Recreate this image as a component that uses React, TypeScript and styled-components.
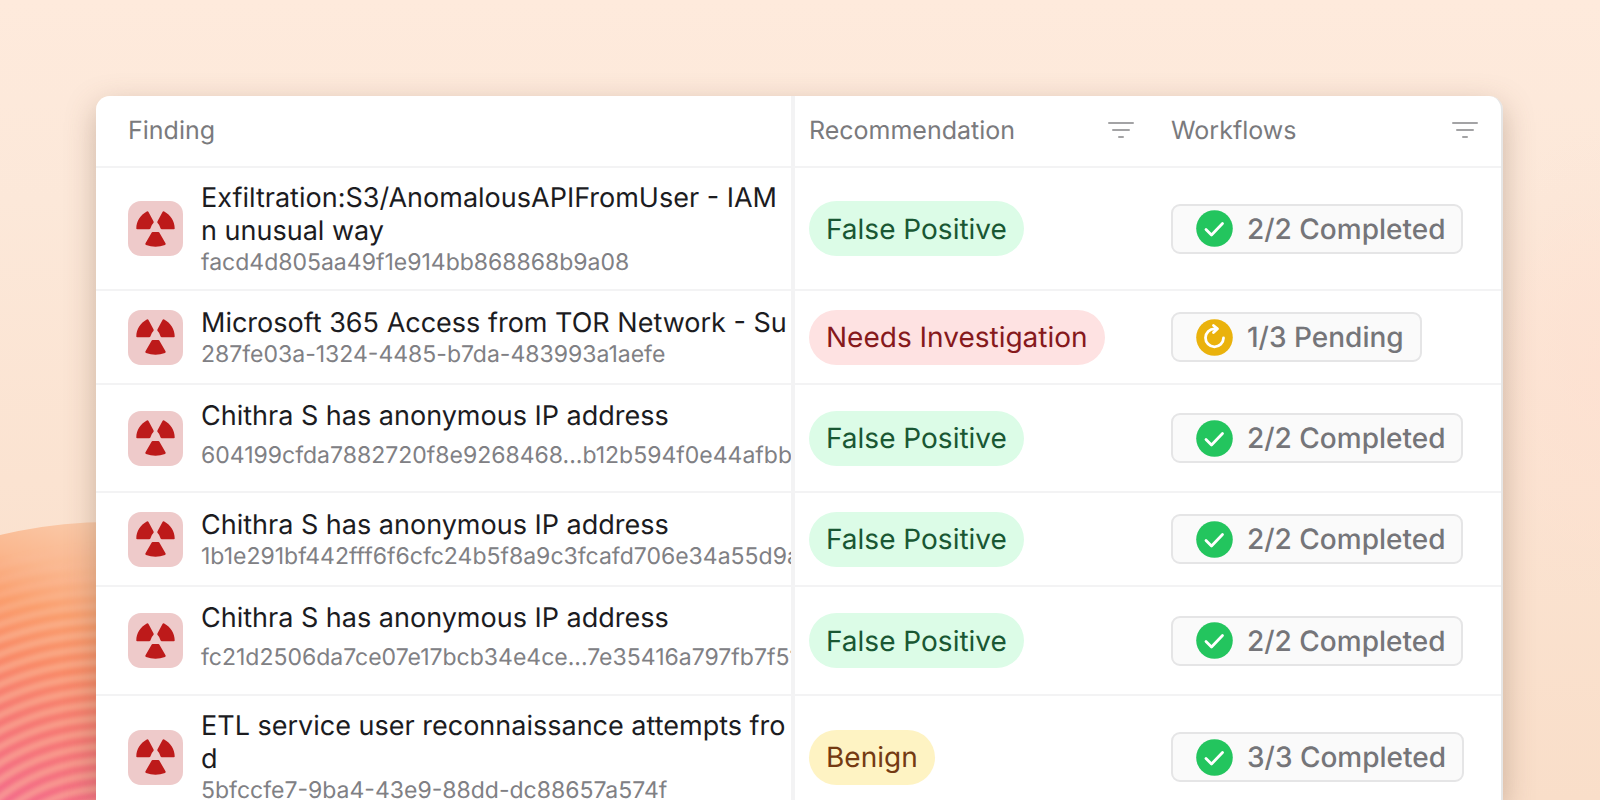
import React from "react";
import styled, { createGlobalStyle } from "styled-components";

type Tone = "positive" | "danger" | "benign";
type Status = "done" | "pending";

const GlobalStyle = createGlobalStyle`
  *, *::before, *::after { box-sizing: border-box; }
  body {
    margin: 0;
    font-family: Inter, "Liberation Sans", sans-serif;
    text-rendering: geometricPrecision;
  }
`;

const Stage = styled.main`
  position: relative;
  height: 100vh;
  overflow: hidden;
  padding: 96px 97px 0 96px;
  background:
    radial-gradient(ellipse 140px 240px at 100% 46%, rgba(255, 222, 208, 0.5), rgba(255, 222, 208, 0)),
    linear-gradient(180deg, #feeadc 0%, #fce8d9 25%, #fbe3d1 60%, #f9dec9 100%);
`;

const Waves = styled.svg`
  position: absolute;
  left: 0;
  bottom: 0;
  width: 240px;
  height: 300px;
`;

const Card = styled.section`
  position: relative;
  height: 100%;
  border-radius: 14px 14px 0 0;
  box-shadow: 0 10px 30px rgba(110, 80, 60, 0.34);
`;

const Clip = styled.div`
  height: 100%;
  overflow: hidden;
  border-right: 2px solid #e6e6e6;
  border-radius: 14px 14px 0 0;
  background: #fff;
`;

const Table = styled.table`
  width: 100%;
  table-layout: fixed;
  border-collapse: separate;
  border-spacing: 0;
`;

const FindingCol = styled.col`
  width: 699px;
`;

const RecommendationCol = styled.col`
  width: 362px;
`;

const HeadCell = styled.th<{ $first?: boolean }>`
  height: 72px;
  padding: ${(p) => (p.$first ? "0 0 0 32px" : "0 23px 0 14px")};
  border-bottom: 2px solid #f3f3f4;
  border-right: ${(p) => (p.$first ? "4px solid #f3f3f4" : "0")};
  color: #7a7a7d;
  font-size: 25px;
  font-weight: 400;
  line-height: 32px;
  text-align: left;
`;

const HeadInner = styled.div`
  display: flex;
  align-items: center;
  justify-content: space-between;
`;

const FilterButton = styled.button`
  display: flex;
  padding: 0;
  border: 0;
  background: none;
  color: #a3a3a5;
`;

const Row = styled.tr<{ $height: number }>`
  height: ${(p) => p.$height}px;
`;

const Cell = styled.td<{ $first?: boolean }>`
  padding: ${(p) => (p.$first ? "0 0 0 32px" : "0 0 0 14px")};
  border-bottom: 2px solid #f3f3f4;
  border-right: ${(p) => (p.$first ? "4px solid #f3f3f4" : "0")};
  overflow: hidden;
  vertical-align: middle;
`;

const Finding = styled.div`
  display: flex;
  align-items: center;
  gap: 18px;
`;

const Tile = styled.span`
  display: flex;
  flex: none;
  align-items: center;
  justify-content: center;
  width: 55px;
  height: 55px;
  border-radius: 13px;
  background: #eecaca;
`;

const FindingText = styled.div`
  min-width: 0;
  white-space: nowrap;
`;

const Title = styled.div`
  color: #1c1c1f;
  font-size: 27px;
  line-height: 33px;
`;

const Ident = styled.div<{ $tall?: boolean }>`
  color: #808084;
  font-size: 23px;
  line-height: ${(p) => (p.$tall ? 46 : 30)}px;
`;

const tones: Record<Tone, [string, string]> = {
  positive: ["#dcfce7", "#195733"],
  danger: ["#fee2e2", "#86191c"],
  benign: ["#fef3c3", "#743a12"],
};

const Pill = styled.span<{ $tone: Tone }>`
  display: inline-flex;
  align-items: center;
  height: 55px;
  padding: 0 17px;
  border-radius: 28px;
  background: ${(p) => tones[p.$tone][0]};
  color: ${(p) => tones[p.$tone][1]};
  font-size: 28px;
  line-height: 34px;
  vertical-align: middle;
`;

const WorkflowButton = styled.button`
  display: inline-flex;
  align-items: center;
  gap: 14px;
  height: 50px;
  padding: 0 16px 0 23px;
  border: 2px solid #e5e5e6;
  border-radius: 9px;
  background: #fafafa;
  color: #757579;
  font-family: inherit;
  font-size: 28px;
  font-weight: 500;
  line-height: 34px;
  text-rendering: inherit;
  vertical-align: middle;
  white-space: nowrap;
`;

const Radiation = () => (
  <svg width="39" height="36" viewBox="0 0 39 36" fill="#bd1a1a" aria-hidden="true">
    <path d="M.3 17.500C.3 10 4.500 4 10.800 .5Q11.900 0 12.500 1L17.600 10.500Q18 11.500 17.200 12.300Q15.200 14.200 14.600 17Q14.300 18.200 13 18.200H1.200Q.3 18.200 .3 17.500Z" />
    <path d="M38.700 17.500C38.700 10 34.500 4 28.200 .5Q27.100 0 26.500 1L21.400 10.500Q21 11.500 21.800 12.300Q23.800 14.200 24.400 17Q24.700 18.200 26 18.200H37.800Q38.700 18.200 38.700 17.500Z" />
    <path d="M15.700 21.500Q16.100 20.700 17 21H22Q22.900 20.700 23.300 21.500L29.500 32.300Q30 33.400 29 34Q19.500 37.500 10 34Q9 33.400 9.500 32.300Z" />
  </svg>
);

const FilterIcon = () => (
  <svg width="26" height="20" viewBox="0 0 26 20" stroke="currentColor" strokeWidth="2" strokeLinecap="round" aria-hidden="true">
    <path d="M1 2H25M5 9H21M11 16H15" />
  </svg>
);

const StatusIcon = ({ status }: { status: Status }) => (
  <svg width="37" height="37" viewBox="0 0 37 37" fill="none" stroke="#fff" strokeWidth="2.800" strokeLinecap="round" strokeLinejoin="round" aria-hidden="true">
    <circle cx="18.500" cy="18.500" r="18.300" fill={status === "done" ? "#23c55e" : "#eab20c"} stroke="none" />
    {status === "done" ? (
      <path d="M10 19.500L15.500 25L26.500 13.500" />
    ) : (
      <>
        <path d="M20.500 9.800H18.500A9 9 0 1 0 27.500 19" />
        <path d="M17.500 6.500L21.500 9.800L17.500 13.500" />
      </>
    )}
  </svg>
);

interface Item {
  title: string[];
  id: string;
  tall?: boolean;
  height: number;
  tone: Tone;
  verdict: string;
  status: Status;
  workflow: string;
}

const items: Item[] = [
  { title: ["Exfiltration:S3/AnomalousAPIFromUser - IAM", "n unusual way"], id: "facd4d805aa49f1e914bb868868b9a08", height: 123, tone: "positive", verdict: "False Positive", status: "done", workflow: "2/2 Completed" },
  { title: ["Microsoft 365 Access from TOR Network - Su"], id: "287fe03a-1324-4485-b7da-483993a1aefe", height: 94, tone: "danger", verdict: "Needs Investigation", status: "pending", workflow: "1/3 Pending" },
  { title: ["Chithra S has anonymous IP address"], id: "604199cfda7882720f8e9268468...b12b594f0e44afbb", tall: true, height: 108, tone: "positive", verdict: "False Positive", status: "done", workflow: "2/2 Completed" },
  { title: ["Chithra S has anonymous IP address"], id: "1b1e291bf442fff6f6cfc24b5f8a9c3fcafd706e34a55d9a", height: 94, tone: "positive", verdict: "False Positive", status: "done", workflow: "2/2 Completed" },
  { title: ["Chithra S has anonymous IP address"], id: "fc21d2506da7ce07e17bcb34e4ce...7e35416a797fb7f51", tall: true, height: 109, tone: "positive", verdict: "False Positive", status: "done", workflow: "2/2 Completed" },
  { title: ["ETL service user reconnaissance attempts fro", "d"], id: "5bfccfe7-9ba4-43e9-88dd-dc88657a574f", height: 124, tone: "benign", verdict: "Benign", status: "done", workflow: "3/3 Completed" },
];

const rings = Array.from({ length: 22 }, (_, i) => i);

export default function App() {
  return (
    <Stage>
      <GlobalStyle />
      <Waves viewBox="0 0 240 300" aria-hidden="true">
        <defs>
          <linearGradient id="glow" gradientUnits="userSpaceOnUse" x1="80" y1="22" x2="0" y2="305">
            <stop offset="0" stopColor="#fac9a8" />
            <stop offset="0.170" stopColor="#fab78e" />
            <stop offset="0.320" stopColor="#fa9d6c" />
            <stop offset="0.500" stopColor="#f98966" />
            <stop offset="0.700" stopColor="#f67772" />
            <stop offset="1" stopColor="#f4698a" />
          </linearGradient>
          <filter id="soft" x="-10%" y="-10%" width="120%" height="120%">
            <feGaussianBlur stdDeviation="2.200" />
          </filter>
        </defs>
        <circle cx="110" cy="492" r="470" fill="url(#glow)" />
        <g fill="none" stroke="#fbbf9f" strokeWidth="7" filter="url(#soft)">
          {rings.map((i) => (
            <circle key={i} cx="110" cy="442" r={392 - i * 14} strokeOpacity={Math.min(0.5, 0.2 + i * 0.06)} />
          ))}
        </g>
      </Waves>
      <Card>
        <Clip>
          <Table>
            <colgroup>
              <FindingCol />
              <RecommendationCol />
              <col />
            </colgroup>
            <thead>
              <tr>
                <HeadCell $first scope="col">Finding</HeadCell>
                <HeadCell scope="col">
                  <HeadInner>
                    Recommendation
                    <FilterButton type="button" aria-label="Filter recommendations"><FilterIcon /></FilterButton>
                  </HeadInner>
                </HeadCell>
                <HeadCell scope="col">
                  <HeadInner>
                    Workflows
                    <FilterButton type="button" aria-label="Filter workflows"><FilterIcon /></FilterButton>
                  </HeadInner>
                </HeadCell>
              </tr>
            </thead>
            <tbody>
              {items.map((item) => (
                <Row key={item.id} $height={item.height}>
                  <Cell $first>
                    <Finding>
                      <Tile><Radiation /></Tile>
                      <FindingText>
                        {item.title.map((line) => <Title key={line}>{line}</Title>)}
                        <Ident $tall={item.tall}>{item.id}</Ident>
                      </FindingText>
                    </Finding>
                  </Cell>
                  <Cell><Pill $tone={item.tone}>{item.verdict}</Pill></Cell>
                  <Cell>
                    <WorkflowButton type="button">
                      <StatusIcon status={item.status} />
                      {item.workflow}
                    </WorkflowButton>
                  </Cell>
                </Row>
              ))}
            </tbody>
          </Table>
        </Clip>
      </Card>
    </Stage>
  );
}
